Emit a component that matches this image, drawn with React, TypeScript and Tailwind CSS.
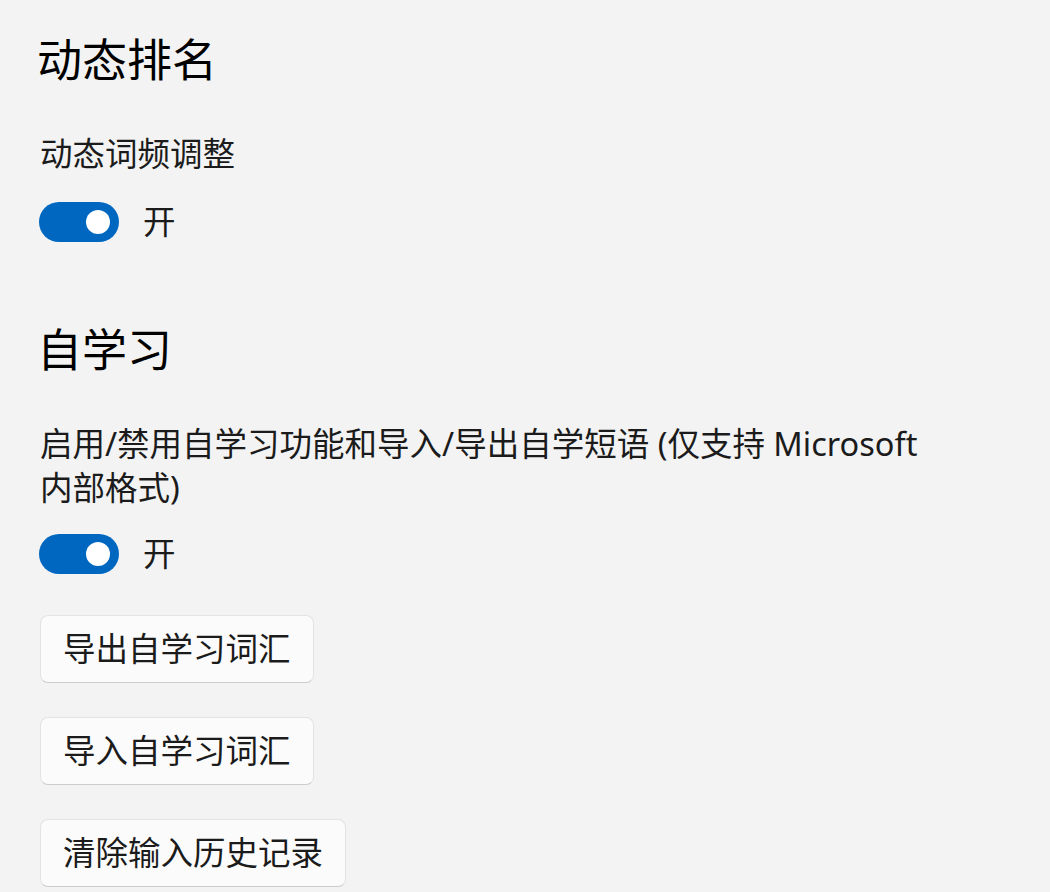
import { useState } from 'react';

const font = { fontFamily: '"Noto Sans", "Noto Sans CJK SC", sans-serif' };

function Toggle({ on, onChange }: { on: boolean; onChange: (v: boolean) => void }) {
  return (
    <div className="flex items-center h-[40px]">
      <button
        onClick={() => onChange(!on)}
        className={
          on
            ? 'w-[80px] h-[40px] rounded-full bg-[#0067c0] flex items-center justify-end pr-[9px]'
            : 'w-[80px] h-[40px] rounded-full border-2 border-[#5d5d5d] bg-[#f3f3f3] flex items-center justify-start pl-[9px]'
        }
      >
        <span className={on ? 'w-[24px] h-[24px] rounded-full bg-white' : 'w-[20px] h-[20px] rounded-full bg-[#5d5d5d]'} />
      </button>
      <span className="ml-[24px] text-[32.5px] leading-[40px] text-[#1b1b1b]">{on ? '开' : '关'}</span>
    </div>
  );
}

function ActionButton({ label }: { label: string }) {
  return (
    <button className="h-[68px] px-[22px] rounded-[8px] bg-[#fbfbfb] border border-[#e3e3e3] border-b-[#cccccc] text-[32.5px] leading-[44px] text-[#1b1b1b] self-start">
      {label}
    </button>
  );
}

export default function App() {
  const [dynamic, setDynamic] = useState(true);
  const [selfLearn, setSelfLearn] = useState(true);

  return (
    <div className="min-h-[892px] bg-[#f3f3f3] pl-[40px] pt-[30px]" style={font}>
      <h2 className="-ml-[3px] text-[45px] leading-[60px] text-black">动态排名</h2>
      <p className="mt-[42px] text-[32.5px] leading-[44px] text-[#1b1b1b]">动态词频调整</p>
      <div className="mt-[26px] -ml-[1px]">
        <Toggle on={dynamic} onChange={setDynamic} />
      </div>

      <h2 className="mt-[78px] -ml-[3px] text-[45px] leading-[60px] text-black">自学习</h2>
      <p className="mt-[42px] max-w-[885px] text-[32.5px] leading-[44px] text-[#1b1b1b]">
        启用/禁用自学习功能和导入/导出自学短语 (仅支持 Microsoft 内部格式)
      </p>
      <div className="mt-[24px] -ml-[1px]">
        <Toggle on={selfLearn} onChange={setSelfLearn} />
      </div>

      <div className="mt-[41px] flex flex-col gap-[34px]">
        <ActionButton label="导出自学习词汇" />
        <ActionButton label="导入自学习词汇" />
        <ActionButton label="清除输入历史记录" />
      </div>
    </div>
  );
}
